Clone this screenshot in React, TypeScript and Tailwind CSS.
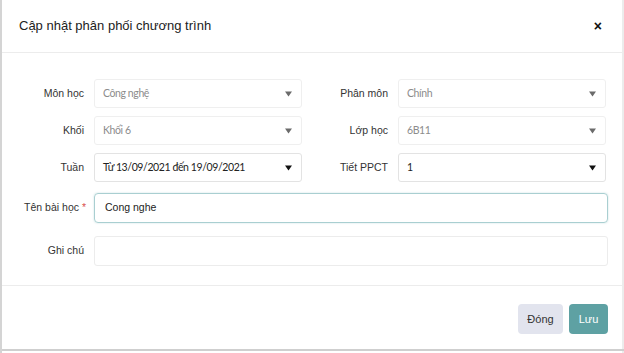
import React from 'react';

const Caret: React.FC<{ dark?: boolean }> = ({ dark }) => (
  <svg width="7" height="6" viewBox="0 0 7 6" className="shrink-0">
    <path d="M0 0.5 L7 0.5 L3.5 5.5 Z" fill={dark ? '#111' : '#6b6b6b'} />
  </svg>
);

const SelectBox: React.FC<{ value: string; active?: boolean }> = ({ value, active }) => (
  <div
    className={
      'w-[208px] h-[29px] flex items-center justify-between pl-[8px] pr-[9px] bg-white border rounded-[3px] ' +
      (active ? 'border-[#e3e3e3]' : 'border-[#efefef]')
    }
  >
    <span
      className={'text-[10.5px] tracking-[-0.4px] ' + (active ? 'text-[#222]' : 'text-[#8c8c8c]')}
      style={{ fontFamily: 'Lato, "Open Sans", sans-serif' }}
    >
      {value}
    </span>
    <Caret dark={active} />
  </div>
);

const Field: React.FC<{ label: string; labelW: string; value: string; active?: boolean }> = ({ label, labelW, value, active }) => (
  <div className="flex items-center">
    <div className={labelW + ' text-right text-[10.5px] text-[#333] pr-[10px]'}>{label}</div>
    <SelectBox value={value} active={active} />
  </div>
);

export default function App() {
  return (
    <div
      className="relative w-[624px] h-[353px] bg-white overflow-hidden border-l-2 border-[#d4d4d4]"
      style={{ fontFamily: '"Liberation Sans", Arial, sans-serif' }}
    >
      <div className="absolute left-[-2px] top-[120px] w-[2px] h-[30px] bg-[#8a9a9a]" />
      <div className="absolute right-0 top-0 w-[2px] h-full bg-[#ececec]" />

      {/* header */}
      <div className="h-[53px] flex items-center justify-between pl-[17px] pr-[22px] border-b border-[#ececec]">
        <h2 className="text-[13px] text-[#222]">Cập nhật phân phối chương trình</h2>
        <span className="text-[14px] font-bold text-[#111] leading-none">×</span>
      </div>

      {/* body */}
      <div className="pt-[26px] pb-[19px] border-b border-[#ececec]">
        <div className="flex flex-col gap-[8px]">
          <div className="flex">
            <Field label="Môn học" labelW="w-[92px]" value="Công nghệ" />
            <Field label="Phân môn" labelW="w-[96px]" value="Chính" />
          </div>
          <div className="flex">
            <Field label="Khối" labelW="w-[92px]" value="Khối 6" />
            <Field label="Lớp học" labelW="w-[96px]" value="6B11" />
          </div>
          <div className="flex">
            <Field label="Tuần" labelW="w-[92px]" value="Từ 13/09/2021 đến 19/09/2021" active />
            <Field label="Tiết PPCT" labelW="w-[96px]" value="1" active />
          </div>
        </div>

        <div className="flex items-center mt-[11px]">
          <div className="w-[92px] text-right text-[10.5px] text-[#333] pr-[8px]">
            Tên bài học <span className="text-[#d9534f]">*</span>
          </div>
          <div className="w-[514px] h-[30px] flex items-center px-[10px] border border-[#a9cfd1] rounded-[4px] shadow-[0_0_2px_rgba(95,160,163,0.35)]">
            <span className="text-[10.5px] text-[#222]">Cong nghe</span>
          </div>
        </div>

        <div className="flex items-center mt-[13px]">
          <div className="w-[92px] text-right text-[10.5px] text-[#333] pr-[10px]">Ghi chú</div>
          <div className="w-[514px] h-[30px] border border-[#ececec] rounded-[3px]" />
        </div>
      </div>

      {/* footer */}
      <div className="flex justify-end gap-[6px] pt-[18px] pr-[16px]">
        <button className="w-[45px] h-[30px] rounded-[4px] bg-[#e2e4ee] text-[11px] text-[#333]">Đóng</button>
        <button className="w-[39px] h-[30px] rounded-[4px] bg-[#5ea1a3] text-[11px] text-white">Lưu</button>
      </div>

      <div className="absolute left-0 right-0 bottom-[2px] h-[2px] bg-[#cfcfcf]" />
    </div>
  );
}
